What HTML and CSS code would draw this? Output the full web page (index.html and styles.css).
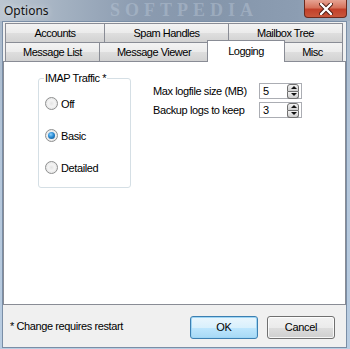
FILE: index.html
```html
<!DOCTYPE html>
<html>
  <head>
    <meta charset="utf-8">
    <title>Options</title>
    <link rel="stylesheet" href="styles.css">
  </head>
<body>
  <div class="window">
    <div class="titlebar">
      <span class="title">Options</span>
      <span class="watermark">SOFTPEDIA</span>
      <div class="close">
        <svg width="14" height="12" viewBox="0 0 14 12">
          <path d="M2 1 L12 11 M12 1 L2 11" stroke="#4a1a12" stroke-width="4.2" stroke-linecap="round"/>
          <path d="M2 1 L12 11 M12 1 L2 11" stroke="#fff" stroke-width="2.4" stroke-linecap="round"/>
        </svg>
      </div>
    </div>

    <div class="client">
      <div class="tabs">
        <div class="tabrow row1">
          <div class="tab">Accounts</div>
          <div class="tab">Spam Handles</div>
          <div class="tab">Mailbox Tree</div>
        </div>
        <div class="tabrow row2">
          <div class="tab">Message List</div>
          <div class="tab">Message Viewer</div>
          <div class="tab active">Logging</div>
          <div class="tab">Misc</div>
        </div>
      </div>

      <div class="panel">
        <fieldset class="group">
          <legend>IMAP Traffic *</legend>
          <div class="radios">
            <label class="radio-row"><span class="radio"></span>Off</label>
            <label class="radio-row"><span class="radio checked"></span>Basic</label>
            <label class="radio-row"><span class="radio"></span>Detailed</label>
          </div>
        </fieldset>

        <div class="settings">
          <span class="setting-label">Max logfile size (MB)</span>
          <div class="spin">
            <span class="spin-value">5</span>
            <span class="spin-buttons"><span class="spin-up"></span><span class="spin-down"></span></span>
          </div>
          <span class="setting-label">Backup logs to keep</span>
          <div class="spin">
            <span class="spin-value">3</span>
            <span class="spin-buttons"><span class="spin-up"></span><span class="spin-down"></span></span>
          </div>
        </div>
      </div>

      <div class="footer">
        <span class="note">* Change requires restart</span>
        <button class="btn default" type="button">OK</button>
        <button class="btn" type="button">Cancel</button>
      </div>
    </div>
  </div>
</body>
</html>
```

FILE: styles.css
```css
body {
  margin: 0;
  font-family: "Liberation Sans", Arial, sans-serif;
  font-size: 11px;
  letter-spacing: -0.4px;
  color: #000;
}

.window {
  width: 350px;
  height: 349px;
  box-sizing: border-box;
  padding: 0 3px 3px 2px;
  background: linear-gradient(180deg, #a8b7c8 0%, #b4c6da 40%, #b9cde2 100%);
}

.titlebar {
  position: relative;
  height: 21px;
  margin: 0 -3px 0 -2px;
  background: linear-gradient(90deg, #bcc6d1 0%, #a3b1c1 18%, #8b9bb0 40%, #8596ab 62%, #8c9db2 85%, #a4b3c4 100%);
}

.title {
  position: absolute;
  left: 4px;
  top: 2px;
  font-family: "Noto Sans", sans-serif;
  font-size: 12px;
  letter-spacing: 0;
  color: #111;
  text-shadow: 0 0 6px rgba(255, 255, 255, 0.7);
}

.watermark {
  position: absolute;
  left: 110px;
  top: 0;
  font-family: "Liberation Serif", serif;
  font-weight: bold;
  font-size: 18px;
  line-height: 21px;
  letter-spacing: 5px;
  color: rgba(200, 212, 226, 0.35);
}

.close {
  position: absolute;
  right: 3px;
  top: 0;
  width: 43px;
  height: 18px;
  box-sizing: border-box;
  border: 1px solid #6b2a1e;
  border-top: none;
  border-radius: 0 0 4px 4px;
  background: linear-gradient(180deg, #e6a393 0%, #d6725c 45%, #c2402a 55%, #c8573c 100%);
  display: flex;
  align-items: center;
  justify-content: center;
}

.client {
  height: 325px;
  border: 1px solid #7a8ea6;
  background: #f0f0f0;
  display: flex;
  flex-direction: column;
}

.tabs {
  padding: 1px 3px 0 2px;
}

.tabrow {
  display: grid;
  height: 19px;
}

.row1 {
  grid-template-columns: 100px 124px 1fr;
}

.row2 {
  grid-template-columns: 95px 109px 74px 1fr;
}

.tab {
  border-top: 1px solid #898c95;
  border-right: 1px solid #898c95;
  background: linear-gradient(180deg, #f3f3f3 0%, #ebebeb 50%, #dedede 51%, #d2d2d2 100%);
  text-align: center;
  line-height: 18px;
  letter-spacing: -0.5px;
}

.tab:first-child {
  border-left: 1px solid #898c95;
}

.tab.active {
  position: relative;
  z-index: 1;
  margin: -2px -2px -1px -2px;
  border-left: 1px solid #898c95;
  background: #fff;
  line-height: 20px;
}

.panel {
  height: 244px;
  box-sizing: border-box;
  border: 1px solid #898c95;
  background: #fff;
  padding: 10px 0 0 34px;
  display: flex;
  align-items: flex-start;
}

.group {
  width: 93px;
  height: 116px;
  box-sizing: border-box;
  margin: 0;
  padding: 0 0 0 5px;
  border: 1px solid #d5dfe5;
  border-radius: 3px;
}

.group legend {
  padding: 0 1px;
}

.radios {
  display: flex;
  flex-direction: column;
  gap: 19px;
  padding-top: 13px;
}

.radio-row {
  display: flex;
  align-items: center;
  gap: 3px;
  height: 13px;
  padding-left: 1px;
}

.radio {
  width: 13px;
  height: 13px;
  box-sizing: border-box;
  border-radius: 50%;
  border: 1px solid #8e8f8f;
  background: radial-gradient(circle at 50% 50%, #e4e4e4 0%, #f4f4f4 40%, #dcdcdc 100%);
  display: flex;
  align-items: center;
  justify-content: center;
}

.radio.checked::after {
  content: "";
  width: 7px;
  height: 7px;
  border-radius: 50%;
  background: radial-gradient(circle at 40% 35%, #8fd3ff 0%, #2a8bd4 45%, #0c4a82 100%);
}

.settings {
  display: grid;
  grid-template-columns: 106px 43px;
  row-gap: 3px;
  align-items: center;
  margin: 11px 0 0 22px;
}

.spin {
  height: 16px;
  box-sizing: border-box;
  border: 1px solid #abadb3;
  display: flex;
  align-items: center;
  justify-content: space-between;
  padding: 0 2px 0 3px;
}

.spin-buttons {
  display: flex;
  flex-direction: column;
  width: 12px;
}

.spin-up,
.spin-down {
  height: 6px;
  border: 1px solid #707070;
  background: linear-gradient(180deg, #f2f2f2, #cfcfcf);
  position: relative;
}

.spin-up {
  border-radius: 3px 3px 0 0;
}

.spin-down {
  border-top: none;
  border-radius: 0 0 3px 3px;
}

.spin-up::after,
.spin-down::after {
  content: "";
  position: absolute;
  left: 3px;
  border-left: 3px solid transparent;
  border-right: 3px solid transparent;
}

.spin-up::after {
  top: 1px;
  border-bottom: 3px solid #111;
}

.spin-down::after {
  top: 1px;
  border-top: 3px solid #111;
}

.footer {
  flex: 1;
  display: flex;
  align-items: center;
  padding: 2px 11px 0 7px;
}

.note {
  flex: 1;
  margin-top: -3px;
}

.btn {
  width: 68px;
  height: 23px;
  margin-left: 9px;
  border: 1px solid #707070;
  border-radius: 3px;
  background: linear-gradient(180deg, #f2f2f2 0%, #ebebeb 50%, #dddddd 51%, #cfcfcf 100%);
  box-shadow: inset 0 0 0 1px rgba(255, 255, 255, 0.8);
  font-family: "Liberation Sans", Arial, sans-serif;
  font-size: 11px;
  letter-spacing: -0.3px;
  color: #000;
}

.btn.default {
  border-color: #3c7fb1;
  background: linear-gradient(180deg, #eaf6fd 0%, #d9f0fc 50%, #bee6fd 51%, #a7d9f5 100%);
  box-shadow: inset 0 0 0 1px #9fd6f5;
}
```
